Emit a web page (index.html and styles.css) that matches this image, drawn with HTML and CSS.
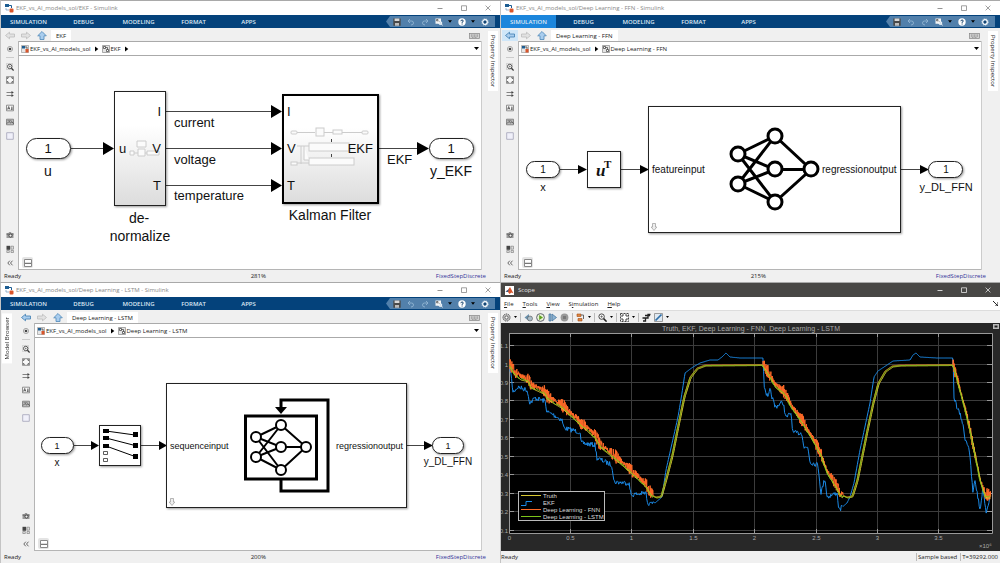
FILE: index.html
```html
<!DOCTYPE html>
<html lang="en">
<head>
<meta charset="utf-8">
<meta name="viewport" content="width=device-width, initial-scale=1">
<title>EKF_vs_AI_models_sol - Simulink</title>
<link rel="stylesheet" href="styles.css">
</head>
<body>
<svg class="sprite" aria-hidden="true">
  <symbol id="i-app" viewBox="0 0 9 9"><rect x="0" y="0" width="4" height="3" fill="#1d5d92"/><path d="M4 1.500H6.500V4" fill="none" stroke="#1d5d92"/><rect x="4.500" y="4.500" width="4" height="4" rx="1" fill="#d9552b"/><path d="M1 4v2h3" fill="none" stroke="#6f97b8" stroke-width=".7"/></symbol>
  <symbol id="i-left" viewBox="0 0 10 8"><path d="M.5 4 4.500.7V2.500h5v3h-5v1.800z" fill="var(--fill)" stroke="var(--line)" stroke-width=".8"/></symbol>
  <symbol id="i-right" viewBox="0 0 10 8"><path d="M9.500 4 5.500.7V2.500h-5v3h5v1.800z" fill="var(--fill)" stroke="var(--line)" stroke-width=".8"/></symbol>
  <symbol id="i-up" viewBox="0 0 10 9"><path d="M5 .5 9.300 4.800H7v3.700H3V4.800H.7z" fill="#a9cdee" stroke="#4c86b8" stroke-width=".8"/></symbol>
  <symbol id="i-kbd" viewBox="0 0 11 6"><rect x=".5" y=".5" width="10" height="5" fill="#d2d2d2" stroke="#858585" stroke-width=".7"/><path d="M2 2h7M2 3.200h7M3 4.400h5" stroke="#777" stroke-width=".6" stroke-dasharray="1 .5"/></symbol>
  <symbol id="i-model" viewBox="0 0 8 8"><path d="M.5.500h7v7h-7z" fill="#e6e6e6" stroke="#999" stroke-width=".7"/><path d="M1 1h3v2.500H1z" fill="#1d5d92"/><path d="M4.500 4h3v3.500h-3z" fill="#d9552b"/><path d="M4 2h2v2" stroke="#333" fill="none" stroke-width=".7"/></symbol>
  <symbol id="i-sub" viewBox="0 0 8 8"><path d="M.5.500h7v7h-7z" fill="#e4e4e4" stroke="#888" stroke-width=".7"/><path d="M1.500 1.500h2v2h-2zM4.500 4.500h2v2h-2zM3.500 2.500h2v2" fill="#fff" stroke="#333" stroke-width=".7"/></symbol>
  <symbol id="i-dot" viewBox="0 0 8 8"><circle cx="4" cy="4" r="2.600" fill="#eee" stroke="#888" stroke-width=".7"/><circle cx="4" cy="4" r="1.300" fill="#444"/></symbol>
  <symbol id="i-zoom" viewBox="0 0 8 8"><path d="M.5.500h6v6h-6z" fill="none" stroke="#999" stroke-width=".6" stroke-dasharray="1 1"/><circle cx="3.700" cy="3.500" r="2.200" fill="#fff" stroke="#444" stroke-width=".9"/><path d="m5.400 5.200 2.200 2.300" stroke="#333" stroke-width="1.200"/><path d="M2.700 3.500h2M3.700 2.500v2" stroke="#444" stroke-width=".5"/></symbol>
  <symbol id="i-fit" viewBox="0 0 8 8"><path d="M.4.700h7.200v6.600H.4z" fill="#f8f8f8" stroke="#666" stroke-width=".7"/><path d="M1.400 3V1.700h1.400M5.200 1.700h1.400V3M6.600 5v1.300H5.200M2.800 6.300H1.400V5" fill="none" stroke="#444" stroke-width=".8"/></symbol>
  <symbol id="i-lines" viewBox="0 0 8 8"><path d="M.5 2.500h6M.5 5.500h6" stroke="#666" stroke-width=".8"/><path d="M5.500 1v3l2.300-1.500zM5.500 4v3l2.300-1.500z" fill="#444"/></symbol>
  <symbol id="i-note" viewBox="0 0 8 8"><path d="M.5 1.200h7v5.600h-7z" fill="#fafafa" stroke="#777" stroke-width=".8"/><path d="m1.500 5.500 1.200-3 1.200 3M2 4.700h1.400M5 3.200h1.700M5 4.400h1.700M5 5.500h1.700" fill="none" stroke="#333" stroke-width=".7"/></symbol>
  <symbol id="i-image" viewBox="0 0 8 8"><path d="M.5 1.200h7v5.600h-7z" fill="#bbb" stroke="#777" stroke-width=".8"/><path d="m1 5.500 2-2 1.500 1.300L6 3.700l1.500 2" fill="none" stroke="#444" stroke-width=".8"/><path d="M1.500 2.600h4" stroke="#666" stroke-width=".6"/></symbol>
  <symbol id="i-area" viewBox="0 0 8 8"><path d="M.7.700h6.600v6.600H.7z" fill="#f0f0fa" stroke="#a2a2b8" stroke-width=".8"/></symbol>
  <symbol id="i-camera" viewBox="0 0 8 8"><path d="M.5 2h2l.6-1h1.800l.6 1h2v5h-7z" fill="#999"/><path d="M.5 3.200h7" stroke="#555" stroke-width=".7"/><circle cx="4.500" cy="4.600" r="1.500" fill="#eee" stroke="#333" stroke-width=".8"/></symbol>
  <symbol id="i-grid" viewBox="0 0 8 8"><path d="M.5.800h3.700v4H.5z" fill="#444"/><path d="M5 1.200h2.500v3H5zM.8 5.500h2.500v2H.8zM5 5.500h2.500v2H5z" fill="#ddd" stroke="#777" stroke-width=".6"/></symbol>
  <symbol id="i-chev" viewBox="0 0 8 8"><path d="M3.800 1.700 1.800 4l2 2.300M6.500 1.700 4.500 4l2 2.300" fill="none" stroke="#444" stroke-width=".8"/></symbol>
  <symbol id="i-save" viewBox="0 0 8 8"><path d="M.3.500h7.400v7.200H.3z" fill="#4a4a4a"/><path d="M1.600.5h4.800v2.600H1.600z" fill="#d8d8d8"/><path d="M2 5h4v2.700H2z" fill="#bbb"/></symbol>
  <symbol id="i-undo" viewBox="0 0 8 8"><path d="M3 1 1 3l2 2M1 3h3.500q2 0 2 2T4 7" fill="none" stroke="#92b4d2" stroke-width=".9"/></symbol>
  <symbol id="i-redo" viewBox="0 0 8 8"><path d="m5 1 2 2-2 2m2-2H3.500q-2 0-2 2T4 7" fill="none" stroke="#92b4d2" stroke-width=".9"/></symbol>
  <symbol id="i-find" viewBox="0 0 8 8"><path d="M.5.500h5.500v5.200H.5z" fill="#f4f4f4"/><path d="M1.500 1.500h1.500v1.300H1.500zM3.800 3.500h1.400" stroke="#555" stroke-width=".8" fill="none"/><circle cx="5.300" cy="5" r="1.500" fill="#cfdfed" stroke="#fff" stroke-width=".8"/><path d="m6.400 6.100 1.400 1.400" stroke="#fff"/></symbol>
  <symbol id="i-help" viewBox="0 0 8 8"><circle cx="4" cy="4" r="3.700" fill="#fff"/><path d="M2.900 3.200q0-1.200 1.200-1.200t1.100 1.100Q5.100 4 4.100 4.200v.7M4.100 5.500v1" fill="none" stroke="#123f6a"/></symbol>
  <symbol id="i-gear" viewBox="0 0 8 8"><circle cx="4" cy="4" r="2.300" fill="#235b90" stroke="#fff" stroke-width="1.200"/><circle cx="4" cy="4" r="3.200" fill="none" stroke="#fff" stroke-width=".7" stroke-dasharray="1 1"/><circle cx="4" cy="4" r="1" fill="#123f6a"/></symbol>
  <symbol id="i-caret" viewBox="0 0 5 3"><path d="M0 0h5L2.500 3z"/></symbol>
  <symbol id="i-play" viewBox="0 0 5 6"><path d="M1 .5v5L4.300 3z"/></symbol>
  <symbol id="i-min" viewBox="0 0 6 6"><path d="M.5 3.500h5" stroke="currentColor" stroke-width=".9"/></symbol>
  <symbol id="i-max" viewBox="0 0 6 6"><path d="M.5.800h5v4.700h-5z" fill="none" stroke="currentColor" stroke-width=".8"/></symbol>
  <symbol id="i-close" viewBox="0 0 6 6"><path d="m.6.600 4.800 4.800m0-4.800L.6 5.400" stroke="currentColor" stroke-width=".8"/></symbol>
  <symbol id="i-fold" viewBox="0 0 8 8"><path d="M.5.500h7v7h-7z" fill="#fff" stroke="#888"/><path d="M1 4.300h6" stroke="#555"/></symbol>
  <symbol id="i-expand" viewBox="0 0 6 8"><path d="M1.500.500h3V4h1.300L3 7.500.2 4h1.300z" fill="#eee" stroke="#999" stroke-width=".7"/></symbol>
  <linearGradient id="g-block" x1="0" y1="0" x2="0" y2="1"><stop offset=".3" stop-color="#fff"/><stop offset="1" stop-color="#dcdcdc"/></linearGradient>
</svg>

<main class="desktop">
  <section class="window">
    <header class="titlebar"><svg class="ic9"><use href="#i-app"/></svg><h2 class="title">EKF_vs_AI_models_sol/EKF - Simulink</h2>
      <div class="winbtns"><button aria-label="Minimize"><svg><use href="#i-min"/></svg></button><button aria-label="Maximize"><svg><use href="#i-max"/></svg></button><button aria-label="Close"><svg><use href="#i-close"/></svg></button></div></header>
    <nav class="strip"><button class="tab">SIMULATION</button><button class="tab">DEBUG</button><button class="tab">MODELING</button><button class="tab">FORMAT</button><button class="tab">APPS</button>
      <div class="quick"><button aria-label="Save"><svg><use href="#i-save"/></svg></button><button aria-label="Undo"><svg><use href="#i-undo"/></svg></button><button aria-label="Redo"><svg><use href="#i-redo"/></svg></button><button class="drop" aria-label="Find"><svg><use href="#i-find"/></svg><svg class="caret"><use href="#i-caret"/></svg></button><button class="drop" aria-label="Help"><svg><use href="#i-help"/></svg><svg class="caret"><use href="#i-caret"/></svg></button><button aria-label="Settings"><svg><use href="#i-gear"/></svg></button></div></nav>
    <div class="body">
      <div class="editor">
        <div class="docbar"><button class="nav" aria-label="Back"><svg><use href="#i-left"/></svg></button><button class="nav" aria-label="Forward"><svg><use href="#i-right"/></svg></button><button class="nav" aria-label="Up"><svg><use href="#i-up"/></svg></button><button class="doc">EKF</button><button class="kbd" aria-label="Keyboard"><svg><use href="#i-kbd"/></svg></button></div>
        <div class="work">
          <div class="palette"><button class="first" aria-label="Hide"><svg><use href="#i-dot"/></svg></button><button aria-label="Zoom"><svg><use href="#i-zoom"/></svg></button><button aria-label="Fit to view"><svg><use href="#i-fit"/></svg></button><button aria-label="Sample time"><svg><use href="#i-lines"/></svg></button><button aria-label="Annotation"><svg><use href="#i-note"/></svg></button><button aria-label="Image"><svg><use href="#i-image"/></svg></button><button aria-label="Area"><svg><use href="#i-area"/></svg></button><span class="fill"></span><button aria-label="Screenshot"><svg><use href="#i-camera"/></svg></button><button aria-label="Viewmarks"><svg><use href="#i-grid"/></svg></button><button aria-label="Collapse"><svg><use href="#i-chev"/></svg></button></div>
          <div class="sheet">
            <div class="crumbs"><svg class="ic8"><use href="#i-model"/></svg><button>EKF_vs_AI_models_sol</button><svg class="sep"><use href="#i-play"/></svg><svg class="ic8"><use href="#i-sub"/></svg><button>EKF</button><svg class="sep"><use href="#i-play"/></svg><button class="history" aria-label="History"><svg class="caret"><use href="#i-caret"/></svg></button></div>
            <div class="canvas">
              <svg class="model" viewBox="19 56 462 213" role="img" aria-label="EKF model">
                <g class="wire"><path d="M71 148.500h34M166 111.500h107M166 148.500h107M166 185.500h107M379 148.500h41"/></g>
                <path class="head" d="M103 142v13l11-6.500zM271 105v13l11-6.500zM271 142v13l11-6.500zM271 179v13l11-6.500zM417 142v13l12-6.500z"/>
                <g class="block"><rect x="26.500" y="138.500" width="44" height="20" rx="10"/><rect x="114.500" y="91.500" width="51" height="114" fill="url(#g-block)"/><rect class="bold" x="283" y="95" width="95" height="108" fill="url(#g-block)"/><rect x="429.500" y="138.500" width="44" height="20" rx="10"/></g>
                <g class="ghost"><path d="M137 141h9v6h-9zM130 151h4v4h-4zM138 149h7v7h-7zM147 151h12v4h-12zM134 153h4M145 153h2"/><path d="M297 132.500h18M324 132.500h9M342 132.500h21"/><rect x="291" y="131" width="6" height="3" rx="1"/><rect x="316" y="128" width="8" height="8"/><rect x="333" y="130" width="9" height="4"/><rect x="362" y="131" width="6" height="3" rx="1"/><rect x="309" y="143" width="40" height="8"/><rect x="309" y="158" width="45" height="7"/><path d="M297 146h12M301 146v18M304 146v14h5M291 163h18"/><rect x="291" y="162" width="6" height="3"/></g>
                <path class="wire" d="M331.500 139v3M331.500 154v3"/>
                <g class="t13"><text x="48" y="153" class="mid">1</text><text x="119" y="153">u</text><text x="161" y="116" class="end">I</text><text x="161" y="153" class="end">V</text><text x="161" y="190" class="end">T</text><text x="174" y="127">current</text><text x="174" y="164">voltage</text><text x="174" y="200">temperature</text><text x="287" y="116">I</text><text x="287" y="153">V</text><text x="287" y="190">T</text><text x="373" y="153" class="end">EKF</text><text x="387" y="164">EKF</text><text x="451" y="153" class="mid">1</text></g>
                <g class="t14 mid"><text x="48" y="176">u</text><text x="139" y="223">de-</text><text x="140" y="241">normalize</text><text x="330" y="220">Kalman Filter</text><text x="451" y="176">y_EKF</text></g>
              </svg>
              <button class="fold" aria-label="Toggle explorer"><svg><use href="#i-fold"/></svg></button>
            </div>
          </div>
        </div>
      </div>
      <aside class="dock right"><button>Property Inspector</button></aside>
    </div>
    <footer class="status"><span>Ready</span><span>281%</span><a href="#">FixedStepDiscrete</a></footer>
  </section>

  <section class="window">
    <header class="titlebar"><svg class="ic9"><use href="#i-app"/></svg><h2 class="title">EKF_vs_AI_models_sol/Deep Learning - FFN - Simulink</h2>
      <div class="winbtns"><button aria-label="Minimize"><svg><use href="#i-min"/></svg></button><button aria-label="Maximize"><svg><use href="#i-max"/></svg></button><button aria-label="Close"><svg><use href="#i-close"/></svg></button></div></header>
    <nav class="strip"><button class="tab active">SIMULATION</button><button class="tab">DEBUG</button><button class="tab">MODELING</button><button class="tab">FORMAT</button><button class="tab">APPS</button>
      <div class="quick"><button aria-label="Save"><svg><use href="#i-save"/></svg></button><button aria-label="Undo"><svg><use href="#i-undo"/></svg></button><button aria-label="Redo"><svg><use href="#i-redo"/></svg></button><button class="drop" aria-label="Find"><svg><use href="#i-find"/></svg><svg class="caret"><use href="#i-caret"/></svg></button><button class="drop" aria-label="Help"><svg><use href="#i-help"/></svg><svg class="caret"><use href="#i-caret"/></svg></button><button aria-label="Settings"><svg><use href="#i-gear"/></svg></button></div></nav>
    <div class="body">
      <div class="editor">
        <div class="docbar"><button class="nav on hover" aria-label="Back"><svg><use href="#i-left"/></svg></button><button class="nav" aria-label="Forward"><svg><use href="#i-right"/></svg></button><button class="nav" aria-label="Up"><svg><use href="#i-up"/></svg></button><button class="doc">Deep Learning - FFN</button><button class="kbd" aria-label="Keyboard"><svg><use href="#i-kbd"/></svg></button></div>
        <div class="work">
          <div class="palette"><button class="first" aria-label="Hide"><svg><use href="#i-dot"/></svg></button><button aria-label="Zoom"><svg><use href="#i-zoom"/></svg></button><button aria-label="Fit to view"><svg><use href="#i-fit"/></svg></button><button aria-label="Sample time"><svg><use href="#i-lines"/></svg></button><button aria-label="Annotation"><svg><use href="#i-note"/></svg></button><button aria-label="Image"><svg><use href="#i-image"/></svg></button><button aria-label="Area"><svg><use href="#i-area"/></svg></button><span class="fill"></span><button aria-label="Screenshot"><svg><use href="#i-camera"/></svg></button><button aria-label="Viewmarks"><svg><use href="#i-grid"/></svg></button><button aria-label="Collapse"><svg><use href="#i-chev"/></svg></button></div>
          <div class="sheet">
            <div class="crumbs"><svg class="ic8"><use href="#i-model"/></svg><button>EKF_vs_AI_models_sol</button><svg class="sep"><use href="#i-play"/></svg><svg class="ic8"><use href="#i-sub"/></svg><button>Deep Learning - FFN</button><button class="history" aria-label="History"><svg class="caret"><use href="#i-caret"/></svg></button></div>
            <div class="canvas">
              <svg class="model" viewBox="519 56 462 213" role="img" aria-label="Feed-forward network model">
                <path class="wire" d="M560 169.500h20M621 169.500h22M901 169.500h20"/>
                <path class="head" d="M578 165v9l9-4.500zM640 165v9l9-4.500zM920 165v9l9-4.500z"/>
                <g class="block"><rect x="526.500" y="161.500" width="33" height="16" rx="8"/><rect x="587.500" y="151.500" width="33" height="36"/><rect x="648.500" y="106.500" width="252" height="126"/><rect x="928.500" y="161.500" width="34" height="16" rx="8"/></g>
                <g class="net wide"><path d="M738 154 775 136 811 169.500 775 202 738 184M738 154 775 169.500H811M738 184 775 169.500M738 154 775 202M738 184 775 136"/><circle cx="738" cy="154" r="7"/><circle cx="738" cy="184" r="7"/><circle cx="775" cy="136" r="7"/><circle cx="775" cy="169" r="7"/><circle cx="775" cy="202" r="7"/><circle cx="811" cy="169" r="7"/></g>
                <use href="#i-expand" x="651" y="223" width="6" height="8"/>
                <g class="t10"><text x="543" y="173" class="mid">1</text><text x="652" y="173">featureinput</text><text x="822" y="173">regressionoutput</text><text x="946" y="173" class="mid">1</text></g>
                <g class="t11 mid"><text x="543" y="191">x</text><text x="946" y="191">y_DL_FFN</text></g>
                <text x="596" y="176" class="math">u</text><text x="604" y="168" class="sup">T</text>
              </svg>
              <button class="fold" aria-label="Toggle explorer"><svg><use href="#i-fold"/></svg></button>
            </div>
          </div>
        </div>
      </div>
      <aside class="dock right"><button>Property Inspector</button></aside>
    </div>
    <footer class="status"><span>Ready</span><span>215%</span><a href="#">FixedStepDiscrete</a></footer>
  </section>

  <section class="window">
    <header class="titlebar"><svg class="ic9"><use href="#i-app"/></svg><h2 class="title">EKF_vs_AI_models_sol/Deep Learning - LSTM - Simulink</h2>
      <div class="winbtns"><button aria-label="Minimize"><svg><use href="#i-min"/></svg></button><button aria-label="Maximize"><svg><use href="#i-max"/></svg></button><button aria-label="Close"><svg><use href="#i-close"/></svg></button></div></header>
    <nav class="strip"><button class="tab">SIMULATION</button><button class="tab">DEBUG</button><button class="tab">MODELING</button><button class="tab">FORMAT</button><button class="tab">APPS</button>
      <div class="quick"><button aria-label="Save"><svg><use href="#i-save"/></svg></button><button aria-label="Undo"><svg><use href="#i-undo"/></svg></button><button aria-label="Redo"><svg><use href="#i-redo"/></svg></button><button class="drop" aria-label="Find"><svg><use href="#i-find"/></svg><svg class="caret"><use href="#i-caret"/></svg></button><button class="drop" aria-label="Help"><svg><use href="#i-help"/></svg><svg class="caret"><use href="#i-caret"/></svg></button><button aria-label="Settings"><svg><use href="#i-gear"/></svg></button></div></nav>
    <div class="body">
      <aside class="dock left"><button>Model Browser</button></aside>
      <div class="editor">
        <div class="docbar"><button class="nav on" aria-label="Back"><svg><use href="#i-left"/></svg></button><button class="nav" aria-label="Forward"><svg><use href="#i-right"/></svg></button><button class="nav" aria-label="Up"><svg><use href="#i-up"/></svg></button><button class="doc">Deep Learning - LSTM</button><button class="kbd" aria-label="Keyboard"><svg><use href="#i-kbd"/></svg></button></div>
        <div class="work">
          <div class="palette"><button class="first" aria-label="Hide"><svg><use href="#i-dot"/></svg></button><button aria-label="Zoom"><svg><use href="#i-zoom"/></svg></button><button aria-label="Fit to view"><svg><use href="#i-fit"/></svg></button><button aria-label="Sample time"><svg><use href="#i-lines"/></svg></button><button aria-label="Annotation"><svg><use href="#i-note"/></svg></button><button aria-label="Image"><svg><use href="#i-image"/></svg></button><button aria-label="Area"><svg><use href="#i-area"/></svg></button><span class="fill"></span><button aria-label="Screenshot"><svg><use href="#i-camera"/></svg></button><button aria-label="Viewmarks"><svg><use href="#i-grid"/></svg></button><button aria-label="Collapse"><svg><use href="#i-chev"/></svg></button></div>
          <div class="sheet">
            <div class="crumbs"><svg class="ic8"><use href="#i-model"/></svg><button>EKF_vs_AI_models_sol</button><svg class="sep"><use href="#i-play"/></svg><svg class="ic8"><use href="#i-sub"/></svg><button>Deep Learning - LSTM</button><button class="history" aria-label="History"><svg class="caret"><use href="#i-caret"/></svg></button></div>
            <div class="canvas">
              <svg class="model" viewBox="35 338 446 212" role="img" aria-label="LSTM network model">
                <path class="wire" d="M74 445.500h20M141 445.500h20M407 445.500h20"/>
                <path class="head" d="M91 441v9l8-4.500zM159 441v9l8-4.500zM424 441v9l9-4.500z"/>
                <g class="block"><rect x="41.500" y="437.500" width="32" height="16" rx="8"/><rect x="99.500" y="425.500" width="41" height="40"/><rect x="166.500" y="383.500" width="240" height="124"/><rect x="432.500" y="437.500" width="31" height="16" rx="8"/></g>
                <path d="M106 431 135 435M106 438 135 445.500M106 446 135 456.500" stroke="#000" fill="none"/>
                <path d="M103 429h6v4h-6zM103 436h6v4h-6zM103 444h6v4h-6zM133 432h5v5h-5zM133 443h5v5h-5zM133 454h5v5h-5z"/>
                <path d="M103.500 451.500h4v3h-4zM103.500 458.500h4v3h-4z" fill="#fff" stroke="#333" stroke-width=".8"/>
                <path d="M245.500 416h71v63h-71zM281 480v11h47v-91h-47v8" fill="none" stroke="#000" stroke-width="3"/><path d="M275 407h12l-6 7z"/>
                <g class="net"><path d="M256 437 281 425 306 447 281 470 256 457M256 437 281 447H306M256 457 281 447M256 437 281 470M256 457 281 425"/><circle cx="256" cy="437" r="5"/><circle cx="256" cy="457" r="5"/><circle cx="281" cy="425" r="5"/><circle cx="281" cy="447" r="5"/><circle cx="281" cy="470" r="5"/><circle cx="306" cy="447" r="5"/></g>
                <use href="#i-expand" x="169" y="498" width="6" height="8"/>
                <g class="t9"><text x="57" y="449" class="mid">1</text><text x="170" y="449">sequenceinput</text><text x="403" y="449" class="end">regressionoutput</text><text x="448" y="449" class="mid">1</text></g>
                <g class="t10 mid"><text x="57" y="466">x</text><text x="448" y="465">y_DL_FFN</text></g>
              </svg>
              <button class="fold" aria-label="Toggle explorer"><svg><use href="#i-fold"/></svg></button>
            </div>
          </div>
        </div>
      </div>
      <aside class="dock right"><button>Property Inspector</button></aside>
    </div>
    <footer class="status"><span>Ready</span><span>200%</span><a href="#">FixedStepDiscrete</a></footer>
  </section>

  <section class="window scope">
    <header class="titlebar dark"><svg class="ic9" viewBox="0 0 9 9"><path d="M0 0h9v9H0z" fill="#fff"/><path d="M.5 5.500 3 4l2-3 3.500 6.500-2-1L4.500 8 3 6z" fill="#d9552b"/><path d="M.5 5.500 3 4l1-1.500-1 3.500z" fill="#1d5d92"/></svg><h2 class="title">Scope</h2>
      <div class="winbtns"><button aria-label="Minimize"><svg><use href="#i-min"/></svg></button><button aria-label="Maximize"><svg><use href="#i-max"/></svg></button><button aria-label="Close"><svg><use href="#i-close"/></svg></button></div></header>
    <nav class="menubar"><button><u>F</u>ile</button><button><u>T</u>ools</button><button><u>V</u>iew</button><button>S<u>i</u>mulation</button><button><u>H</u>elp</button><button class="more" aria-label="Undock"><svg viewBox="0 0 5 5"><path d="m0 0 5 5V1M5 5H2" stroke="#222" fill="none"/></svg></button></nav>
    <div class="tools">
      <button class="drop" aria-label="Configuration"><svg viewBox="0 0 9 9"><circle cx="4.500" cy="4.500" r="3.600" fill="#bbb" stroke="#555" stroke-dasharray="1.200 .8"/><circle cx="4.500" cy="4.500" r="1.500" fill="#fff" stroke="#555" stroke-width=".8"/></svg><svg class="caret"><use href="#i-caret"/></svg></button><i></i>
      <button aria-label="Step back"><svg viewBox="0 0 9 9"><path d="M5 1v7L.5 4.500z" fill="#6a91ad"/><circle cx="6" cy="5.500" r="2.500" fill="#a9bcc8" stroke="#555" stroke-width=".6"/></svg></button>
      <button aria-label="Run"><svg viewBox="0 0 9 9"><circle cx="4.500" cy="4.500" r="3.900" fill="#e8f2d8" stroke="#556" stroke-width=".9"/><path d="M3.200 2v5L7 4.500z" fill="#5da01e"/></svg></button>
      <button aria-label="Step forward"><svg viewBox="0 0 9 9"><path d="M1 1h2v7H1zM4 1l4.500 3.500L4 8z" fill="#8fb4d2" stroke="#3d6f99" stroke-width=".7"/></svg></button>
      <button aria-label="Stop"><svg viewBox="0 0 9 9"><circle cx="4.500" cy="4.500" r="3.900" fill="#999"/><path d="M3 3h3v3H3z" fill="#777"/></svg></button><i></i>
      <button class="drop" aria-label="Highlight"><svg viewBox="0 0 9 9"><path d="M1 1h4v2.500H1zM2 5.500h4V8H2z" fill="#de8740" stroke="#a34b16" stroke-width=".6"/><path d="M5 2h2.500v4" fill="none" stroke="#666"/></svg><svg class="caret"><use href="#i-caret"/></svg></button><i></i>
      <button class="drop" aria-label="Zoom"><svg viewBox="0 0 9 9"><circle cx="3.600" cy="3.600" r="2.700" fill="#fff" stroke="#444"/><path d="m5.600 5.600 3 3" stroke="#222" stroke-width="1.500"/><path d="M2.300 3.600h2.600M3.600 2.300v2.600" stroke="#555" stroke-width=".7"/></svg><svg class="caret"><use href="#i-caret"/></svg></button><i></i>
      <button class="drop" aria-label="Scale axes"><svg viewBox="0 0 9 9"><path d="M.5.500h8v8h-8z" fill="#fff" stroke="#444" stroke-dasharray="2 1"/><path d="M2 4V2h2M5 2h2v2M7 5v2H5M4 7H2V5" fill="none" stroke="#444"/></svg><svg class="caret"><use href="#i-caret"/></svg></button><i></i>
      <button aria-label="Triggers"><svg viewBox="0 0 9 9"><path d="M1 8h2.500V5H6V1.500h2.500M.5 5h4.500M3 2.500h5" fill="none" stroke="#222" stroke-width="1.300"/></svg></button>
      <button class="drop" aria-label="Measurements"><svg viewBox="0 0 9 9"><path d="M.5.500h8v8h-8z" fill="#dfe9f2" stroke="#888" stroke-width=".8"/><path d="M1.500 7.500 7.500 1.500" stroke="#2f6fa8" stroke-width="1.700"/></svg><svg class="caret"><use href="#i-caret"/></svg></button>
    </div>
    <div class="plot">
      <svg class="model" viewBox="501 323 499 228" role="img" aria-label="Truth, EKF and deep learning state of charge over time">
        <rect x="509" y="333" width="483" height="200"/>
        <g id="grid"></g>
        <path id="ekf" class="trace blue"/><path id="fnn" class="trace orange"/><path id="truth" class="trace yellow"/><path id="lstm" class="trace green"/>
        <text x="751" y="331" class="ptitle">Truth, EKF, Deep Learning - FNN, Deep Learning - LSTM</text>
        <g id="ticks" class="tick"></g>
        <text x="979" y="548" class="tick">×10⁶</text>
        <path d="M993 324h6v5h-6z" fill="#bbb"/><path d="M994.500 325.500h3v2h-3z" fill="#222"/>
        <g class="legend"><rect x="518.500" y="491.500" width="86" height="29"/><path class="yellow" d="M521 495.500h20"/><path class="blue" d="M521 505.500h5v-4h6"/><path class="orange" d="M521 509.500h20"/><path class="green" d="M521 516.500h20"/><text x="543" y="498">Truth</text><text x="543" y="505">EKF</text><text x="543" y="512">Deep Learning - FNN</text><text x="543" y="519">Deep Learning - LSTM</text></g>
      </svg>
    </div>
    <footer class="status"><span>Ready</span><span class="cell">Sample based</span><span class="cell">T=39292.000</span></footer>
  </section>
</main>
<script src="scope.js"></script>
</body>
</html>
```
FILE: styles.css
```css
* { box-sizing: border-box; }
body { margin: 0; background: #f0f0f0; color: #222; font: 6px/8px "Open Sans", "Noto Sans", sans-serif; }
button { margin: 0; padding: 0; border: 0; background: none; color: inherit; font: inherit; display: flex; align-items: center; justify-content: center; white-space: nowrap; }
svg { display: block; flex: none; }
.sprite { position: absolute; width: 0; height: 0; }
.desktop { display: grid; grid-template-columns: 1fr 1fr; grid-template-rows: 282fr 281fr; height: 100vh; min-height: 480px; }
.window { display: flex; flex-direction: column; min-width: 0; min-height: 0; border-top: 1px solid #a9a9a9; border-left: 1px solid #c4c4c4; background: #f0f0f0; }

.titlebar { display: flex; align-items: center; height: 14px; flex: none; padding-left: 4px; gap: 2px; background: #fff; color: #888; }
.title { margin: 0; font: inherit; flex: 1; }
.winbtns { display: flex; }
.winbtns button { width: 24px; height: 14px; }
.winbtns svg { width: 6px; height: 6px; }
.titlebar.dark { background: #484745; color: #e4e4e4; }
.dark .title { padding-left: 2px; }
.ic9 { width: 9px; height: 9px; }
.ic8 { width: 8px; height: 8px; }
.caret { width: 5px; height: 3px; }

.strip { display: flex; height: 13px; flex: none; background: #04427b; color: #dce8f4; padding-right: 5px; font-weight: 600; }
.tab { width: 55px; }
.tab.active { background: #1c86dc; }
.quick { display: flex; align-items: center; margin: 1px 0 1px auto; padding: 0 6px 0 7px; gap: 6px; background: #5280ab; clip-path: polygon(0 50%, 4px 0, 100% 0, 100% 100%, 4px 100%); }
.quick svg { width: 8px; height: 8px; }
.quick .caret { width: 4px; height: 3px; }
.drop { gap: 5px; }

.body { display: flex; flex: 1; min-height: 0; }
.editor { display: flex; flex-direction: column; flex: 1; min-width: 0; }
.docbar { display: flex; height: 13px; flex: none; align-items: stretch; padding: 2px 0 0 1px; }
.nav { --fill: #e2e2e2; --line: #bdbdbd; width: 16px; }
.nav.on { --fill: #a9cdee; --line: #3d7cb0; }
.nav.hover { background: #cfe6f8; }
.nav svg { width: 10px; height: 9px; }
.doc { background: #fff; padding: 0 5px; margin-left: 1px; }
.kbd { margin-left: auto; width: 16px; }
.kbd svg { width: 11px; height: 6px; }
.work { display: flex; flex: 1; min-height: 0; }
.palette { display: flex; flex-direction: column; align-items: center; width: 18px; flex: none; gap: 5px; padding: 4px 0 3px; border-right: 1px solid #b5b5b5; }
.palette svg { width: 8px; height: 8px; }
.first { padding-bottom: 4px; border-bottom: 1px solid #ccc; }
.palette button:nth-child(n+4) { padding-top: 1px; }
.palette .fill { flex: 1; }
.sheet { display: flex; flex-direction: column; flex: 1; min-width: 0; background: #fff; border-right: 1px solid #ccc; }
.crumbs { display: flex; align-items: center; height: 15px; flex: none; gap: 1px; padding: 0 2px; border: 1px solid #aaa; border-width: 1px 0; }
.sep { width: 5px; height: 6px; margin: 0 2px; }
.history { margin-left: auto; }
.canvas { position: relative; flex: 1; min-height: 0; border-bottom: 1px solid #b5b5b5; }
.model { width: 100%; height: 100%; }
.fold { position: absolute; left: 3px; bottom: 1px; width: 11px; height: 11px; background: #e4e4e4; border-radius: 2px; }
.fold svg { width: 8px; height: 8px; }
.dock { display: flex; align-items: flex-start; flex: none; }
.dock button { writing-mode: vertical-rl; background: #fff; padding: 4px 1px; }
.dock.right { width: 18px; padding: 3px 0 0 6px; }
.dock.left { width: 16px; padding: 3px 0 0 1px; }
.dock.left button { transform: rotate(180deg); }
.status { display: grid; grid-template-columns: 1fr 1fr 1fr; align-items: center; height: 12px; flex: none; padding: 0 14px 0 3px; }
.status span:nth-child(2) { padding-left: 86px; }
.status a { color: #33339a; text-decoration: none; text-align: right; }

.model text { font-family: "Liberation Sans", Arial, sans-serif; fill: #111; }
.wire { fill: none; stroke: #444; }
.head { fill: #000; }
.block rect { fill: #fff; stroke: #222; stroke-width: 1px; filter: drop-shadow(1px 1px 1px #0006); }
.block rect[fill] { fill: url(#g-block); }
.block .bold { stroke: #000; stroke-width: 2px; }
.ghost { fill: #fbfbfb; stroke: #ccc; stroke-width: 1px; }
.net { fill: #fff; stroke: #000; stroke-width: 2px; }
.net path { fill: none; }
.net.wide { stroke-width: 3px; }
.t9 { font-size: 9px; }
.t10 { font-size: 10px; }
.t11 { font-size: 11px; }
.t13 { font-size: 13px; }
.t14 { font-size: 14px; }
.mid { text-anchor: middle; }
.end { text-anchor: end; }
.model .math { font: italic bold 17px "Liberation Serif", serif; }
.model .sup { font: bold 11px "Liberation Serif", serif; }

.scope .menubar { display: flex; height: 13px; flex: none; gap: 9px; padding: 0 2px 0 3px; background: #fff; }
.menubar .more { margin-left: auto; }
.more svg { width: 5px; height: 5px; }
.tools { display: flex; align-items: center; height: 13px; flex: none; gap: 3px; padding: 0 1px; border-top: 1px solid #ddd; }
.tools .drop { gap: 3px; }
.tools svg { width: 9px; height: 9px; }
.tools .caret { width: 3px; height: 2px; }
.tools i { width: 1px; height: 9px; background: #bbb; }
.plot { flex: 1; min-height: 0; background: #282828; }
.trace, .legend path { fill: none; stroke-width: 1px; stroke-linejoin: round; }
.model .blue { stroke: #1b8ae6; }
.model .orange { stroke: #ff6a28; }
.model .yellow { stroke: #d8c832; }
.model .green { stroke: #7cc41a; }
.grid { stroke: #3c3c3c; fill: none; }
.axis { stroke: #999; fill: none; }
.model .ptitle { font-size: 7px; fill: #aaa; text-anchor: middle; }
.model .tick, .tick text { font-size: 6px; fill: #aaa; }
.model .tick text { fill: #aaa; }
.legend rect { fill: #000; stroke: #bbb; }
.model .legend text { font-size: 6px; fill: #ddd; }
.scope .status { display: flex; gap: 2px; padding: 0 1px 0 0; }
.scope .status span:nth-child(2) { margin-left: auto; }
.scope .status .cell { padding: 0 1px; border-left: 1px solid #bbb; }
```
FILE: scope.js
```js
const el = id => document.getElementById(id);
const px = t => 509 + t * 122.8;
const py = v => 364 + (1 - v) * 184.8;

let grid = '', minor = '', labels = '';
for (let i = 0; i < 8; i++) {
  const x = Math.floor(px(i / 2)) + 0.5;
  grid += `M${x} 333V533`;
  minor += `M${x} 333v4M${x} 533v-4`;
  labels += `<text x="${x}" y="540" text-anchor="middle">${i / 2}</text>`;
}
for (let i = 1; i < 12; i++) {
  const y = Math.floor(py(i / 10)) + 0.5;
  grid += `M509 ${y}H992`;
  minor += `M509 ${y}h5M992 ${y}h-5`;
  labels += `<text x="508" y="${y + 2}" text-anchor="end">${i / 10}</text>`;
}
el('grid').innerHTML = `<path class="grid" d="${grid}"/><path class="axis" d="${minor}M509.500 333.500H992.500V533.500H509.500z"/>`;
el('ticks').innerHTML = labels;

let seed = 7;
const rnd = () => (seed = (seed * 16807) % 2147483647) / 2147483647 - 0.5;

const charge = [[509.5,364],[513,371],[520,377],[528,379],[530,385],[545,392],[547,397],[562,406],[575,418],[595,436],[600,445],[615,457],[630,470],[645,484],[652,495],[656,497],[661,496],[666,478],[672,455],[678,425],[684,396],[690,377],[697,368],[705,365],[763,364.5],[770,376],[775,385],[785,393],[790,404],[800,418],[815,443],[820,452],[827,472],[835,484],[840,494],[847,497],[852,496],[857,480],[861,460],[867,430],[873,402],[878,383],[885,371],[892,366],[900,365],[953,364.5],[958,383],[964,405],[970,430],[975,455],[980,480],[985,495],[991,495]];
const kalman = [[509.5,364],[511,375],[513,392],[518,387],[527,390],[530,403],[535,398],[545,401],[547,412],[552,414],[562,420],[564,428],[580,432],[581,443],[595,445],[597,458],[612,465],[614,482],[629,483],[631,495],[646,493],[648,507],[650,500],[655,503],[662,497],[666,470],[678,417],[682,393],[685,373],[693,367],[700,363],[710,360],[718,360],[722,357],[726,353],[730,357],[740,358],[763,358],[764,385],[768,399],[770,390],[775,407],[783,402],[786,418],[791,413],[793,433],[802,433],[804,448],[808,447],[810,462],[818,465],[821,493],[825,478],[827,497],[837,493],[839,510],[847,503],[850,497],[854,483],[860,450],[870,403],[874,377],[878,371],[887,365],[893,361],[910,360],[913,355],[916,353],[920,357],[937,358],[953,358],[954,397],[957,407],[962,420],[965,438],[969,447],[973,493],[975,480],[980,510],[983,487],[986,512],[991,493]];

const discharging = x => x < 653 || (x > 763 && x < 843) || x > 953;
const constant = w => () => w;
const pulses = x => 9 + 5 * Math.sin(x / 2.7);

function trace(points, step, offset, wobble) {
  let d = '';
  let i = 0;
  for (let x = points[0][0]; x <= 991; x += step) {
    while (i < points.length - 2 && points[i + 1][0] < x) i++;
    const [x0, y0] = points[i], [x1, y1] = points[i + 1];
    const y = y0 + (y1 - y0) * (x - x0) / (x1 - x0) + (discharging(x) ? offset + rnd() * wobble(x) : 0);
    d += (d ? 'L' : 'M') + x.toFixed(1) + ' ' + y.toFixed(1);
  }
  return d;
}

el('ekf').setAttribute('d', trace(kalman, 0.7, 0, constant(5)));
el('fnn').setAttribute('d', trace(charge, 0.2, -1, pulses));
el('truth').setAttribute('d', trace(charge.map(([x, y]) => [x + 1, y + 1]), 1, 2, constant(0)));
el('lstm').setAttribute('d', trace(charge.map(([x, y]) => [x, y + 0.5]), 1, 1, constant(2)));
```
